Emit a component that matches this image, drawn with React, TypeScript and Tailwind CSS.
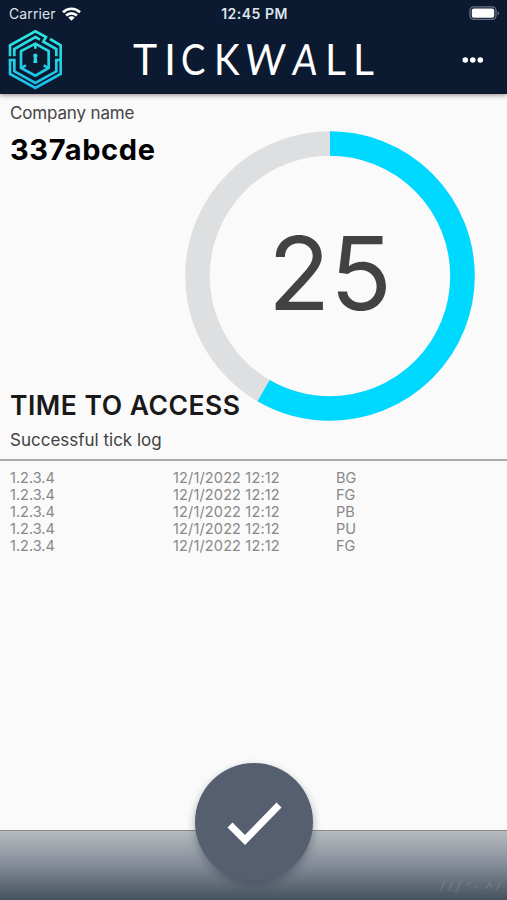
import React from 'react';

interface TickLog {
  id: number;
  ip: string;
  date: string;
  code: string;
}

const ticks: TickLog[] = [
  { id: 1, ip: '1.2.3.4', date: '12/1/2022 12:12', code: 'BG' },
  { id: 2, ip: '1.2.3.4', date: '12/1/2022 12:12', code: 'FG' },
  { id: 3, ip: '1.2.3.4', date: '12/1/2022 12:12', code: 'PB' },
  { id: 4, ip: '1.2.3.4', date: '12/1/2022 12:12', code: 'PU' },
  { id: 5, ip: '1.2.3.4', date: '12/1/2022 12:12', code: 'FG' }
];

const StatusBar = () => (
  <div className="grid h-7 grid-cols-3 items-center pl-[9px] pr-[7px] text-[14px] text-[#dfe4ec]">
    <div className="-mt-px flex items-center gap-[6px]">
      <span className="tracking-[0.1px]">Carrier</span>
      <svg className="h-[14px] w-[19px]" viewBox="0 0 19 14" fill="none" stroke="#fff" strokeWidth="2.7">
        <path d="M1 5.2a12.2 12.2 0 0 1 17 0" />
        <path d="M4.1 8.5a7.8 7.8 0 0 1 10.8 0" />
        <path d="M9.5 13.8 6.3 10.6a4.6 4.6 0 0 1 6.4 0z" fill="#fff" stroke="none" />
      </svg>
    </div>
    <span className="-mt-[2px] text-center text-[14px] font-semibold tracking-[0.5px] whitespace-nowrap">12:45 PM</span>
    <svg className="-mt-[2px] h-[14px] w-[31px] justify-self-end" viewBox="0 0 31 14">
      <rect x="1" y="0.8" width="26" height="12.6" rx="3.8" fill="none" stroke="#6b7383" strokeWidth="1.3" />
      <rect x="2.8" y="2.5" width="22.4" height="9.2" rx="2" fill="#fff" />
      <path d="M28.6 5v4.4c2-.9 2-3.5 0-4.4z" fill="#6b7383" />
    </svg>
  </div>
);

const Logo = () => (
  <svg className="h-[68px] w-[62px]" viewBox="0 0 186 204" fill="none" strokeWidth="8">
    <defs>
      <linearGradient id="logo" gradientUnits="userSpaceOnUse" x1="0" y1="12" x2="0" y2="190">
        <stop offset="0" stopColor="#2ce6dc" />
        <stop offset="1" stopColor="#19bdec" />
      </linearGradient>
    </defs>
    <g stroke="url(#logo)">
      <path d="M18 91V58L94 16L126 33L118 47L157 69V91" />
      <path d="M138 39L170 58V102H157V136L94 171L31 136V102H18V144L94 186L170 144V102" />
      <path d="M31 91V69L94 33L108 41" />
      <path d="M94 53L134 75V126L94 149L51 126V75Z" />
      <path d="M94 53V68M53 125L66 118M132 125L119 118" />
    </g>
    <circle cx="94" cy="89" r="6.5" fill="#25d7e2" />
    <path d="M90 90h8l2 21H88z" fill="#25d7e2" />
  </svg>
);

const Header = () => (
  <header className="relative h-[94px] bg-[#0b1931] shadow-[0_1px_5px_rgba(60,35,35,0.55)]">
    <StatusBar />
    <div className="-mt-0.5 flex h-[68px] items-center pl-1 pr-[23px]">
      <Logo />
      <h1 className="-mt-[2px] ml-[67px] flex h-[44px] w-[244px] font-['Lato'] text-[43px] leading-[43px] font-normal text-white">
        <span className="w-[31px] origin-left scale-x-95">T</span>
        <span className="w-[17px]">I</span>
        <span className="w-[33px] origin-left scale-x-85">C</span>
        <span className="w-[31px] origin-left scale-x-90">K</span>
        <span className="w-[48px] origin-left scale-x-90 -skew-x-6">W</span>
        <span className="w-[32px] origin-left scale-x-85 -skew-x-6">A</span>
        <span className="w-[28px] origin-left scale-x-95">L</span>
        <span className="w-[24px] origin-left scale-x-95">L</span>
      </h1>
      <svg className="ml-auto h-[6px] w-[22px]" viewBox="0 0 22 6" fill="#fff">
        <circle cx="3.3" cy="3" r="2.8" />
        <circle cx="10.8" cy="3" r="2.8" />
        <circle cx="18.3" cy="3" r="2.8" />
      </svg>
    </div>
  </header>
);

const Countdown = ({ seconds, total }: { seconds: number; total: number }) => {
  const radius = 132.5;
  const length = 2 * Math.PI * radius;
  const done = (total - seconds) / total;

  return (
    <div className="grid h-[290px] w-[290px] place-items-center">
      <svg className="col-start-1 row-start-1 h-[290px] w-[290px]" viewBox="0 0 290 290" fill="none" strokeWidth="24.5">
        <circle cx="145" cy="145" r={radius} stroke="#dddfe0" />
        <circle
          cx="145"
          cy="145"
          r={radius}
          stroke="#00d9ff"
          strokeDasharray={`${done * length} ${length}`}
          transform="rotate(-90 145 145)"
        />
      </svg>
      <span className="col-start-1 row-start-1 pb-[7px] text-[102px] leading-none text-[#424242]">{seconds}</span>
    </div>
  );
};

export default function App() {
  return (
    <div className="flex h-[900px] w-[507px] flex-col overflow-hidden bg-[#fafafa] font-['Inter',sans-serif]">
      <Header />

      <section className="flex h-[336px] justify-between pl-[10px] pr-8">
        <div className="flex w-0 flex-col whitespace-nowrap">
          <p className="mt-[7px] text-[17px] leading-6 tracking-[-0.15px] text-[#444]">Company name</p>
          <p className="mt-[7px] text-[29px] leading-9 font-bold tracking-[0.6px] text-black">337abcde</p>
          <h2 className="relative mt-auto mb-[7px] text-[26.5px] leading-9 font-semibold tracking-[0.5px] text-[#191919]">TIME TO ACCESS</h2>
        </div>
        <div className="pt-[37px]">
          <Countdown seconds={25} total={60} />
        </div>
      </section>

      <section className="grow">
        <h3 className="h-[31px] border-b-2 border-[#aaa] pl-[10px] text-[17px] leading-5 text-[#424242]">Successful tick log</h3>
        <ul className="pt-2 pl-[10px] text-[14.5px] leading-[17.1px] text-[#888]">
          {ticks.map((tick) => (
            <li key={tick.id} className="grid grid-cols-[163px_163px_1fr]">
              <span>{tick.ip}</span>
              <span className="tracking-[0.15px]">{tick.date}</span>
              <span>{tick.code}</span>
            </li>
          ))}
        </ul>
      </section>

      <footer className="relative flex h-[70px] justify-center border-t border-[#858888] bg-linear-to-b from-[#b5bcbe] via-[#848b98] to-[#46525f]">
        <button
          aria-label="Confirm tick"
          className="-mt-[68px] flex h-[118px] w-[118px] items-center justify-center rounded-full bg-[#565f70] shadow-[0_4px_8px_rgba(30,40,55,0.38)]"
        >
          <svg className="h-[118px] w-[118px]" viewBox="0 0 118 118" fill="none" stroke="#fff" strokeWidth="7">
            <path d="M35 62L50 77L84 42" />
          </svg>
        </button>
        {/* faint etched marks in the corner */}
        <svg className="absolute right-1 bottom-2 h-[12px] w-[64px] opacity-15" viewBox="0 0 64 12" fill="none" stroke="#dfe4ea" strokeWidth="1.2">
          <path d="M1 11L6 1M10 11L13 2M14 11h6M22 1L18 10M28 5l4-3M36 7h3M46 9l5-6l2 6M57 10l5-8" />
        </svg>
      </footer>
    </div>
  );
}
